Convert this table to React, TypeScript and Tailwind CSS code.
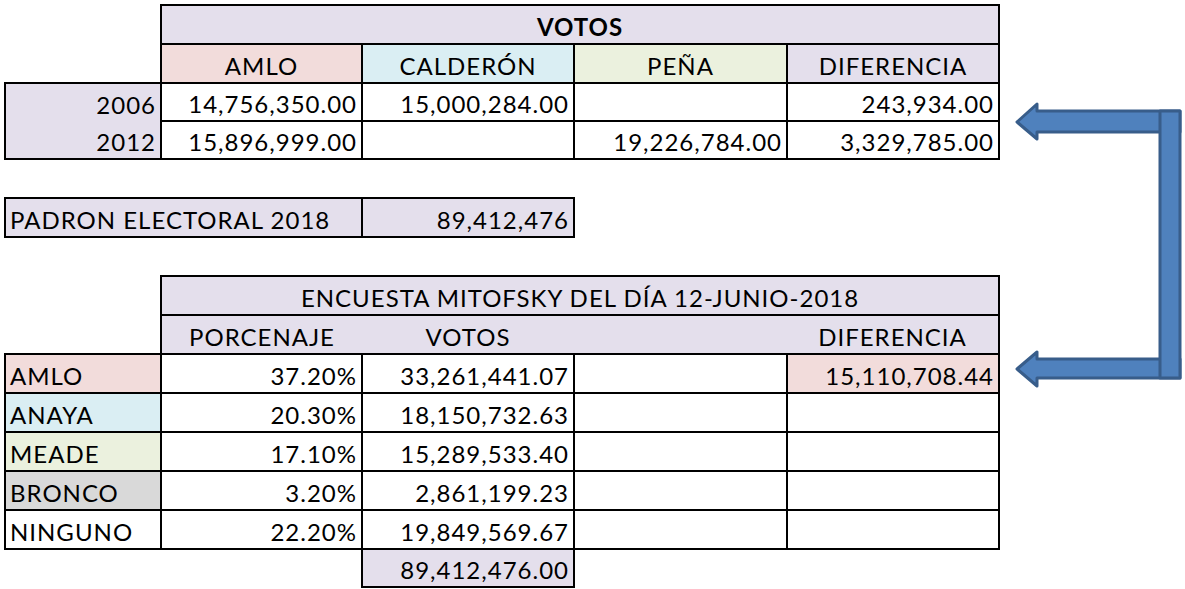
import React from "react";

type Row = {
    name: string;
    bg: string;
    pct: string;
    votos: string;
    dif: string;
    difBg: string;
};

const rows: Row[] = [
    { name: "AMLO", bg: "bg-[#f2dcdb]", pct: "37.20%", votos: "33,261,441.07", dif: "15,110,708.44", difBg: "bg-[#f2dcdb]" },
    { name: "ANAYA", bg: "bg-[#daeef3]", pct: "20.30%", votos: "18,150,732.63", dif: "", difBg: "bg-white" },
    { name: "MEADE", bg: "bg-[#ebf1de]", pct: "17.10%", votos: "15,289,533.40", dif: "", difBg: "bg-white" },
    { name: "BRONCO", bg: "bg-[#d9d9d9]", pct: "3.20%", votos: "2,861,199.23", dif: "", difBg: "bg-white" },
    { name: "NINGUNO", bg: "bg-white", pct: "22.20%", votos: "19,849,569.67", dif: "", difBg: "bg-white" },
];

// celda con borde negro, estilo hoja de calculo
const cell = "border-2 border-black px-[4px] pt-[4px] leading-none whitespace-nowrap";

function Cols() {
    return (
        <colgroup>
            <col className="w-[156px]" />
            <col className="w-[201px]" />
            <col className="w-[212px]" />
            <col className="w-[213px]" />
            <col className="w-[212px]" />
        </colgroup>
    );
}

function Arrow() {
    // flecha en forma de corchete que apunta a las dos diferencias
    return (
        <svg
            className="absolute left-[1005px] top-[95px] pointer-events-none"
            width="180"
            height="300"
            viewBox="1005 95 180 300"
        >
            <g fill="#4f81bd" stroke="#385d8a" strokeWidth="3" strokeLinejoin="round">
                <polygon points="1017,122 1037,104 1037,111 1180,111 1180,132 1037,132 1037,139" />
                <polygon points="1017,369 1037,352 1037,359 1180,359 1180,378 1037,378 1037,386" />
                <rect x="1160" y="111" width="20" height="267" />
            </g>
        </svg>
    );
}

export default function App() {
    return (
        <div className="relative w-[1185px] h-[589px] bg-white text-black overflow-hidden font-['Lato',sans-serif] text-[24px] tracking-[1px]">
            <div className="pl-[4px] pt-[4px] flex flex-col">
                {/* VOTOS 2006 / 2012 */}
                <table className="border-collapse table-fixed w-[994px]">
                    <Cols />
                    <tbody>
                        <tr className="h-[39px]">
                            <td></td>
                            <td colSpan={4} className={cell + " bg-[#e4dfec] text-center font-bold"}>VOTOS</td>
                        </tr>
                        <tr className="h-[39px]">
                            <td></td>
                            <td className={cell + " bg-[#f2dcdb] text-center"}>AMLO</td>
                            <td className={cell + " bg-[#daeef3] text-center"}>CALDERÓN</td>
                            <td className={cell + " bg-[#ebf1de] text-center"}>PEÑA</td>
                            <td className={cell + " bg-[#e4dfec] text-center"}>DIFERENCIA</td>
                        </tr>
                        <tr className="h-[38px]">
                            <td className="border-2 border-b-0 border-black bg-[#e4dfec] text-right px-[4px] pt-[4px] leading-none">2006</td>
                            <td className={cell + " text-right"}>14,756,350.00</td>
                            <td className={cell + " text-right"}>15,000,284.00</td>
                            <td className={cell}></td>
                            <td className={cell + " text-right"}>243,934.00</td>
                        </tr>
                        <tr className="h-[38px]">
                            <td className="border-2 border-t-0 border-black bg-[#e4dfec] text-right px-[4px] pt-[4px] leading-none">2012</td>
                            <td className={cell + " text-right"}>15,896,999.00</td>
                            <td className={cell}></td>
                            <td className={cell + " text-right"}>19,226,784.00</td>
                            <td className={cell + " text-right"}>3,329,785.00</td>
                        </tr>
                    </tbody>
                </table>

                {/* PADRON */}
                <table className="border-collapse table-fixed w-[569px] mt-[37px]">
                    <colgroup>
                        <col className="w-[357px]" />
                        <col className="w-[212px]" />
                    </colgroup>
                    <tbody>
                        <tr className="h-[39px]">
                            <td className={cell + " bg-[#e4dfec] text-left"}>PADRON ELECTORAL 2018</td>
                            <td className={cell + " bg-[#e4dfec] text-right"}>89,412,476</td>
                        </tr>
                    </tbody>
                </table>

                {/* ENCUESTA */}
                <table className="border-collapse table-fixed w-[994px] mt-[37px]">
                    <Cols />
                    <tbody>
                        <tr className="h-[39px]">
                            <td></td>
                            <td colSpan={4} className={cell + " bg-[#e4dfec] text-center"}>ENCUESTA MITOFSKY DEL DÍA 12-JUNIO-2018</td>
                        </tr>
                        <tr className="h-[39px]">
                            <td></td>
                            <td className="border-2 border-r-0 border-black bg-[#e4dfec] text-center pt-[4px] leading-none">PORCENAJE</td>
                            <td className="border-2 border-x-0 border-black bg-[#e4dfec] text-center pt-[4px] leading-none">VOTOS</td>
                            <td className="border-2 border-x-0 border-black bg-[#e4dfec]"></td>
                            <td className="border-2 border-l-0 border-black bg-[#e4dfec] text-center pt-[4px] leading-none">DIFERENCIA</td>
                        </tr>
                        {rows.map((r) => (
                            <tr key={r.name} className="h-[39px]">
                                <td className={cell + " text-left " + r.bg}>{r.name}</td>
                                <td className={cell + " text-right"}>{r.pct}</td>
                                <td className={cell + " text-right"}>{r.votos}</td>
                                <td className={cell}></td>
                                <td className={cell + " text-right " + r.difBg}>{r.dif}</td>
                            </tr>
                        ))}
                        <tr className="h-[38px]">
                            <td></td>
                            <td></td>
                            <td className={cell + " bg-[#e4dfec] text-right"}>89,412,476.00</td>
                            <td></td>
                            <td></td>
                        </tr>
                    </tbody>
                </table>
            </div>
            <Arrow />
        </div>
    );
}
